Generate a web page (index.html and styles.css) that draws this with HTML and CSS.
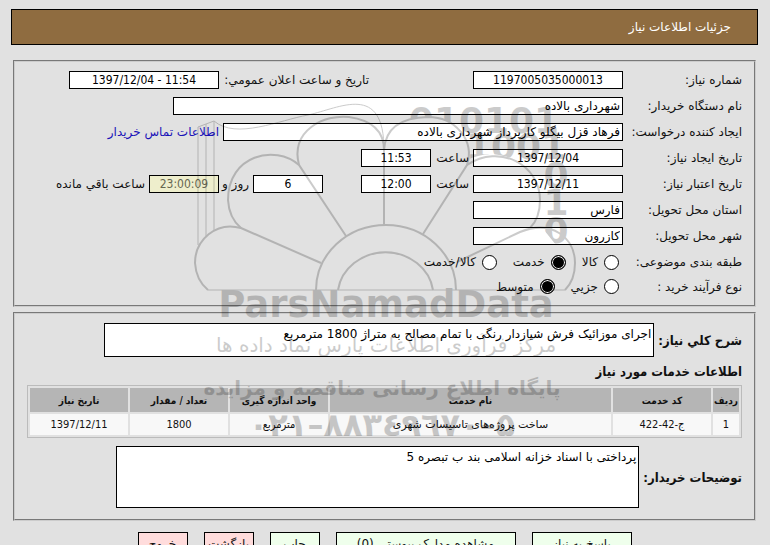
FILE: index.html
```html
<!DOCTYPE html>
<html lang="fa" dir="rtl">
<head>
    <meta charset="UTF-8">
    <meta name="viewport" content="width=device-width, initial-scale=1.0">
    <title>جزئیات اطلاعات نیاز</title>
    <link rel="stylesheet" href="styles.css">
</head>
<body>
    <h1 class="page-title">جزئیات اطلاعات نیاز</h1>

    <form class="need-form">
        <fieldset class="panel details">
            <div class="row">
                <label class="caption" for="needNo">شماره نیاز:</label>
                <input class="field center w-150" type="text" id="needNo" value="1197005035000013" readonly>
                <label class="public-label" for="publicDate">تاریخ و ساعت اعلان عمومي:</label>
                <input class="field center w-150" type="text" id="publicDate" value="1397/12/04 - 11:54" dir="ltr" readonly>
            </div>
            <div class="row">
                <label class="caption" for="buyer">نام دستگاه خریدار:</label>
                <input class="field w-450" type="text" id="buyer" value="شهرداری بالاده" readonly>
            </div>
            <div class="row">
                <label class="caption" for="creator">ایجاد کننده درخواست:</label>
                <input class="field w-400" type="text" id="creator" value="فرهاد قزل بیگلو کارپرداز شهرداری بالاده" readonly>
                <a class="contact" href="#">اطلاعات تماس خریدار</a>
            </div>
            <div class="row">
                <label class="caption" for="createDate">تاریخ ایجاد نیاز:</label>
                <input class="field center w-150" type="text" id="createDate" value="1397/12/04" readonly>
                <label class="hour" for="createHour">ساعت</label>
                <input class="field center w-70" type="text" id="createHour" value="11:53" readonly>
            </div>
            <div class="row">
                <label class="caption" for="validDate">تاریخ اعتبار نیاز:</label>
                <input class="field center w-150" type="text" id="validDate" value="1397/12/11" readonly>
                <label class="hour" for="validHour">ساعت</label>
                <input class="field center w-70" type="text" id="validHour" value="12:00" readonly>
                <input class="field center w-70 days" type="text" id="days" value="6" readonly>
                <label class="day-label" for="days">روز و</label>
                <input class="field center w-70 timer" type="text" id="timer" value="23:00:09" readonly>
                <label class="left-label" for="timer">ساعت باقي مانده</label>
            </div>
            <div class="row">
                <label class="caption" for="province">استان محل تحویل:</label>
                <input class="field w-150" type="text" id="province" value="فارس" readonly>
            </div>
            <div class="row">
                <label class="caption" for="city">شهر محل تحویل:</label>
                <input class="field w-150" type="text" id="city" value="کازرون" readonly>
            </div>
            <div class="row radios">
                <span class="caption">طبقه بندی موضوعی:</span>
                <label><input type="radio" name="subject">کالا</label>
                <label><input type="radio" name="subject" checked>خدمت</label>
                <label><input type="radio" name="subject">کالا/خدمت</label>
            </div>
            <div class="row radios short">
                <span class="caption">نوع فرآیند خرید :</span>
                <label><input type="radio" name="process">جزیي</label>
                <label><input type="radio" name="process" checked>متوسط</label>
            </div>
        </fieldset>

        <fieldset class="panel services">
            <div class="text-row">
                <label for="summary">شرح کلي نیاز:</label>
                <textarea class="field summary" id="summary" readonly>اجرای موزائیک فرش شیازدار رنگی با تمام مصالح به متراژ 1800 مترمربع</textarea>
            </div>
            <h2>اطلاعات خدمات مورد نیاز</h2>
            <table>
                <thead>
                    <tr>
                        <th class="col-row">ردیف</th>
                        <th class="col-code">کد خدمت</th>
                        <th>نام خدمت</th>
                        <th class="col-unit">واحد اندازه گیری</th>
                        <th class="col-unit">تعداد / مقدار</th>
                        <th class="col-unit">تاریخ نیاز</th>
                    </tr>
                </thead>
                <tbody>
                    <tr>
                        <td>1</td>
                        <td>ج-42-422</td>
                        <td class="name">ساخت پروژه‌های تاسیسات شهری</td>
                        <td>مترمربع</td>
                        <td>1800</td>
                        <td>1397/12/11</td>
                    </tr>
                </tbody>
            </table>
            <div class="text-row">
                <label for="notes">توضیحات خریدار:</label>
                <textarea class="field notes" id="notes" readonly>پرداختی با اسناد خزانه اسلامی بند ب تبصره 5</textarea>
            </div>
        </fieldset>

        <div class="buttons">
            <button type="button" class="button wide">پاسخ به نیاز</button>
            <button type="button" class="button widest">مشاهده مدارک پیوستی (0)</button>
            <button type="button" class="button">چاپ</button>
            <button type="button" class="button red">بازگشت</button>
            <button type="button" class="button red">خروج</button>
        </div>
    </form>

    <!-- watermark -->
    <svg class="watermark" viewBox="180 90 420 370" aria-hidden="true">
        <defs>
            <!-- keeps the digits outside the petals -->
            <clipPath id="outside">
                <path d="M390 100H590V250H560L540 225V200C540 165 500 143 467 160C475 140 455 117 428 117Q405 117 390 130Z"/>
            </clipPath>
        </defs>
        <g class="binary" clip-path="url(#outside)">
            <text x="484" y="133">010101</text>
            <text x="516" y="159">1001</text>
            <text x="556" y="188">0</text>
            <text x="556" y="215">1</text>
            <text x="556" y="243">0</text>
        </g>
        <g class="lines">
            <path d="M316 290A70 65 0 0 1 456 290M338 290A48 44 0 0 1 433 290"/>
            <path d="M321 263L241 228C216 221 195 240 195 263Q196 280 208 290"/>
            <path d="M346 236L299 165C275 144 228 155 228 200Q229 218 241 228"/>
            <path d="M299 165C290 130 325 114 349 117Q384 122 384 150V225"/>
            <path d="M384 150Q386 118 428 117C455 117 475 140 467 165L423 234"/>
            <path d="M467 165C500 143 540 165 540 200Q540 218 530 228"/>
            <path d="M457 262L520 232C552 219 575 238 575 263Q575 280 565 290"/>
        </g>
        <g class="lines thin">
            <path d="M208 290H565"/>
            <path d="M198 245V127L214 121V231M206 236V124"/>
            <path d="M214 121C236 140 280 120 308 115C340 108 384 82 384 150"/>
        </g>
        <text class="brand" x="386" y="317">ParsNamadData</text>
        <text class="script" x="386" y="352">مرکز فرآوری اطلاعات پارس نماد داده ها</text>
        <text class="slogan" x="382" y="395">پایگاه اطلاع رسانی مناقصه و مزایده</text>
        <text class="phone" x="382" y="436">۰۲۱–۸۸۳٤۹٦۷۰–۵</text>
    </svg>
</body>
</html>
```
FILE: styles.css
```css
* {
    box-sizing: border-box;
}
body {
    position: relative;
    height: 100vh;
    margin: 0;
    padding: 9px 12px 0 11px;
    overflow: hidden;
    background: #e1e1e1;
    color: #111;
    font-family: "DejaVu Sans", sans-serif;
    font-size: 12px;
}
.page-title {
    margin: 0 0 15px;
    padding: 0 26px;
    border: 1px solid #000;
    background: #8f6c40;
    color: #fff;
    font-size: 12px;
    font-weight: normal;
    line-height: 34px;
}
.panel {
    margin: 0 2px 5px;
    border: 2px groove #ccc;
}
.details {
    padding: 5px 12px 7px;
}
.row {
    display: flex;
    align-items: center;
    height: 26px;
}
.caption {
    width: 119px;
    white-space: nowrap;
}
.field {
    height: 18px;
    padding: 0 2px;
    border: 1px solid #000;
    border-radius: 0;
    outline: none;
    background: #fff;
    color: #000;
    font-family: inherit;
    font-size: 12px;
}
.center {
    text-align: center;
    font-family: "DejaVu Sans Condensed", "DejaVu Sans", sans-serif;
}
.w-70 {
    width: 70px;
}
.w-150 {
    width: 150px;
}
.w-400 {
    width: 400px;
}
.w-450 {
    width: 450px;
}
.public-label {
    width: 150px;
    margin-right: 104px;
    white-space: nowrap;
}
.contact {
    margin-right: 4px;
    color: #1a12b8;
    text-decoration: none;
}
.hour {
    width: 42px;
    padding-right: 4px;
}
.days {
    margin-right: 38px;
}
.day-label {
    width: 34px;
    padding-right: 4px;
    white-space: nowrap;
}
.timer {
    background: #eeeecc;
    color: #666650;
}
.left-label {
    margin-right: 4px;
}
.short {
    height: 23px;
}
.radios label {
    display: flex;
    align-items: center;
    margin-left: 12px;
}
.radios input {
    appearance: none;
    width: 15px;
    height: 15px;
    margin: 0 4px 0 6px;
    border: 1px solid #000;
    border-radius: 50%;
    background: #fff;
}
.radios input:checked {
    background: #000;
    box-shadow: inset 0 0 0 1px #fff;
}
.services {
    padding: 9px 12px 11px;
}
.text-row {
    display: flex;
    align-items: center;
    justify-content: flex-start;
    gap: 4px;
}
.text-row label,
h2 {
    font-family: "DejaVu Sans Condensed", "DejaVu Sans", sans-serif;
    font-size: 13px;
    font-weight: bold;
}
textarea {
    display: block;
    resize: none;
    overflow: hidden;
    line-height: 20px;
}
.summary {
    width: 550px;
    height: 34px;
}
.notes {
    width: 523px;
    height: 62px;
}
h2 {
    margin: 6px 0 4px;
    line-height: 18px;
}
table {
    width: 100%;
    margin-bottom: 8px;
    border: 1px solid #bbb;
    border-spacing: 2px;
    table-layout: fixed;
    font-family: "DejaVu Sans Condensed", "DejaVu Sans", sans-serif;
    font-size: 11px;
}
th,
td {
    height: 24px;
    padding: 0;
    text-align: center;
    white-space: nowrap;
}
th {
    background: #b5b5b5;
    font-size: 10px;
}
td {
    height: 21px;
    background: #f8f8f8;
}
.name {
    font-family: "DejaVu Sans", sans-serif;
}
.col-row {
    width: 26px;
}
.col-code {
    width: 98px;
}
.col-unit {
    width: 98px;
}
.buttons {
    display: flex;
    justify-content: center;
    gap: 16px;
    padding-top: 6px;
}
.button {
    width: 50px;
    height: 24px;
    padding: 0;
    border: 1px solid #000;
    background: #efffec;
    color: #111;
    font-family: inherit;
    font-size: 12px;
    white-space: nowrap;
}
.wide {
    width: 100px;
}
.widest {
    width: 180px;
}
.red {
    background: #ffdcdc;
}
.watermark {
    position: absolute;
    top: 90px;
    left: calc(50% - 205px);
    width: 420px;
    height: 370px;
    opacity: 0.2;
    pointer-events: none;
}
.watermark text {
    fill: #000;
    text-anchor: middle;
    font-family: "DejaVu Sans", sans-serif;
    font-weight: bold;
}
.lines {
    fill: none;
    stroke: #000;
    stroke-width: 2px;
}
.thin {
    stroke-width: 1px;
}
.watermark .binary text {
    direction: ltr;
    font-size: 36px;
}
.watermark .brand {
    direction: ltr;
    font-size: 37px;
}
.watermark .script {
    font-size: 20px;
    font-weight: normal;
}
.watermark .slogan {
    font-size: 20px;
}
.watermark .phone {
    direction: ltr;
    font-size: 32px;
}
```
